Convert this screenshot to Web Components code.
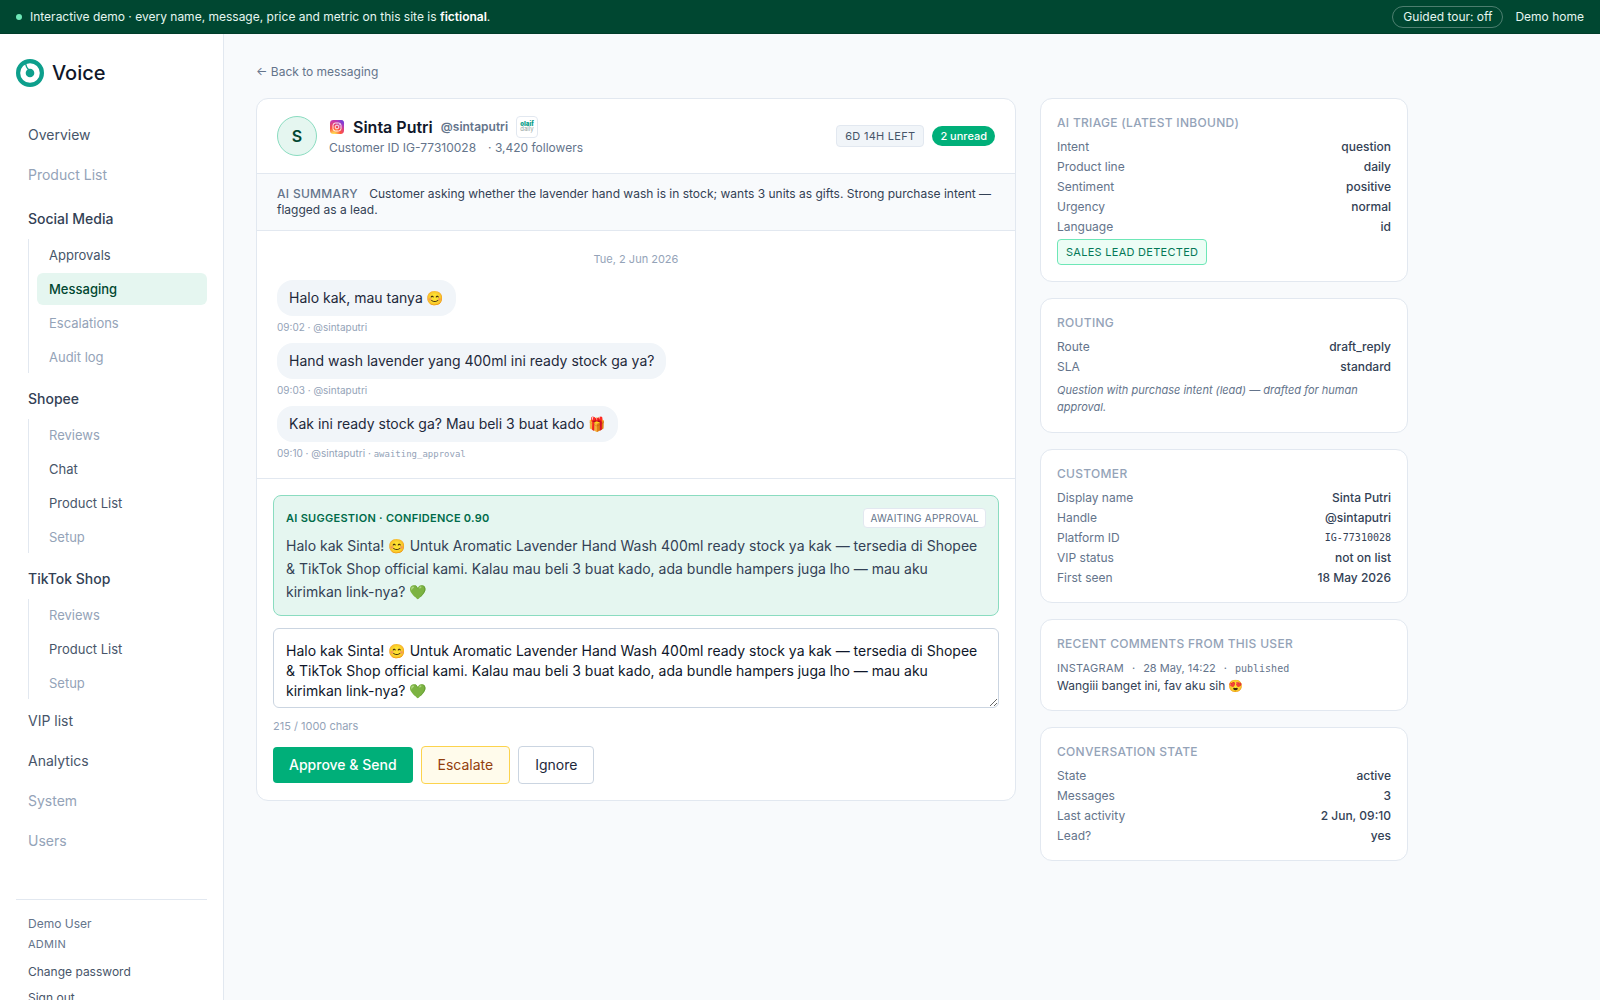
<!DOCTYPE html>
<html lang="en">
<head>
<meta charset="utf-8">
<meta name="viewport" content="width=device-width, initial-scale=1">
<title>Voice - Messaging</title>
<style>
  :root {
    --brand-900: #004731;
    --brand-700: #006b4a;
    --brand-500: #00af79;
    --brand-200: #8adcc0;
    --brand-50: #e5f6f0;
    --line: #e2e8f0;
    --line-strong: #cbd5e1;
    --surface: #f8fafc;
    --text: #0f172a;
    --text-body: #334155;
    --text-soft: #475569;
    --text-muted: #64748b;
    --text-faint: #94a3b8;
    --mono: "DejaVu Sans Mono", "Liberation Mono", monospace;
  }

  body {
    margin: 0;
    background: var(--surface);
    color: var(--text);
    font-family: Inter, "Noto Color Emoji", sans-serif;
    font-size: 14px;
    line-height: 20px;
  }
</style>
</head>
<body>
<voice-app></voice-app>

<script>
class DemoBanner extends HTMLElement {
  constructor() {
    super();
    this.attachShadow({ mode: "open" });
    this.touring = false;
  }

  connectedCallback() {
    this.render();
    this.attachListeners();
  }

  render() {
    this.shadowRoot.innerHTML = `
      <style>
        :host {
          display: flex;
          align-items: center;
          gap: 8px;
          box-sizing: border-box;
          height: 34px;
          padding: 0 16px;
          background: var(--brand-900);
          border-bottom: 1px solid #003d2a;
          color: #e5f6f0;
          font-size: 12px;
          line-height: 16px;
        }
        .dot {
          width: 6px;
          height: 6px;
          border-radius: 50%;
          background: #6ee7b7;
        }
        .message {
          flex: 1;
        }
        strong {
          color: #fff;
          font-weight: 600;
        }
        button {
          font: inherit;
          color: inherit;
          background: none;
          border: 1px solid rgba(255, 255, 255, 0.3);
          border-radius: 11px;
          padding: 2px 10px;
          margin: 0 4px 0 0;
          cursor: pointer;
        }
        a {
          color: inherit;
          text-decoration: none;
        }
      </style>
      <span class="dot"></span>
      <span class="message">Interactive demo · every name, message, price and metric on this site is <strong>fictional</strong>.</span>
      <button type="button">Guided tour: off</button>
      <a href="#home">Demo home</a>
    `;
  }

  attachListeners() {
    const button = this.shadowRoot.querySelector("button");
    button.addEventListener("click", () => {
      this.touring = !this.touring;
      button.textContent = `Guided tour: ${this.touring ? "on" : "off"}`;
    });
  }
}

class NavLink extends HTMLElement {
  constructor() {
    super();
    this.attachShadow({ mode: "open" });
  }

  connectedCallback() {
    this.shadowRoot.innerHTML = `
      <style>
        :host {
          display: block;
        }
        a {
          display: block;
          padding: 8px 12px;
          border-radius: 6px;
          color: var(--text-soft);
          text-decoration: none;
        }
        :host([sub]) a {
          padding: 6px 12px;
          font-size: 13px;
        }
        :host([muted]) a {
          color: var(--text-faint);
        }
        :host([active]) a {
          background: var(--brand-50);
          color: var(--brand-900);
          font-weight: 500;
        }
      </style>
      <a href="#${this.getAttribute("to") || ""}"><slot></slot></a>
    `;
  }
}

class NavGroup extends HTMLElement {
  constructor() {
    super();
    this.attachShadow({ mode: "open" });
  }

  connectedCallback() {
    this.shadowRoot.innerHTML = `
      <style>
        :host {
          display: block;
          padding-top: 8px;
        }
        .heading {
          padding: 4px 12px;
          margin-bottom: 6px;
          color: var(--text-body);
          font-weight: 500;
        }
        .items {
          display: flex;
          flex-direction: column;
          gap: 2px;
          margin-left: 12px;
          padding-left: 8px;
          border-left: 1px solid var(--line);
        }
      </style>
      <div class="heading">${this.getAttribute("label")}</div>
      <div class="items"><slot></slot></div>
    `;
  }
}

class SideBar extends HTMLElement {
  constructor() {
    super();
    this.attachShadow({ mode: "open" });
  }

  connectedCallback() {
    this.shadowRoot.innerHTML = `
      <style>
        :host {
          display: flex;
          flex-direction: column;
          box-sizing: border-box;
          width: 224px;
          flex: none;
          padding: 25px 16px 0;
          background: #fff;
          border-right: 1px solid var(--line);
        }
        .logo {
          display: flex;
          align-items: center;
          gap: 8px;
          margin-bottom: 30px;
          font-size: 20px;
          line-height: 28px;
          font-weight: 500;
        }
        nav {
          display: flex;
          flex-direction: column;
          gap: 4px;
        }
        .account {
          margin-top: 40px;
          padding: 14px 12px;
          border-top: 1px solid var(--line);
          color: var(--text-muted);
          font-size: 12px;
        }
        .role {
          font-size: 11px;
          letter-spacing: 0.025em;
        }
        .account a {
          display: block;
          margin-top: 6px;
          color: var(--text-soft);
          text-decoration: none;
        }
        .role + a {
          margin-top: 8px;
        }
      </style>
      <div class="logo">
        <svg width="28" height="28" viewBox="0 0 28 28" aria-hidden="true">
          <circle cx="14" cy="14" r="11.9" fill="#fff" stroke="#0d9f8c" stroke-width="4.2"/>
          <circle cx="14" cy="14" r="4.3" fill="#0d9f8c"/>
          <path d="M9.6 4.5 C10.2 8 10.6 9.4 13 11" fill="none" stroke="#0d9f8c" stroke-width="1.3"/>
        </svg>
        <span>Voice</span>
      </div>
      <nav>
        <nav-link to="overview">Overview</nav-link>
        <nav-link to="products" muted>Product List</nav-link>
        <nav-group label="Social Media">
          <nav-link to="approvals" sub>Approvals</nav-link>
          <nav-link to="messaging" sub active>Messaging</nav-link>
          <nav-link to="escalations" sub muted>Escalations</nav-link>
          <nav-link to="audit" sub muted>Audit log</nav-link>
        </nav-group>
        <nav-group label="Shopee">
          <nav-link to="shopee-reviews" sub muted>Reviews</nav-link>
          <nav-link to="shopee-chat" sub>Chat</nav-link>
          <nav-link to="shopee-products" sub>Product List</nav-link>
          <nav-link to="shopee-setup" sub muted>Setup</nav-link>
        </nav-group>
        <nav-group label="TikTok Shop">
          <nav-link to="tiktok-reviews" sub muted>Reviews</nav-link>
          <nav-link to="tiktok-products" sub>Product List</nav-link>
          <nav-link to="tiktok-setup" sub muted>Setup</nav-link>
        </nav-group>
        <nav-link to="vip">VIP list</nav-link>
        <nav-link to="analytics">Analytics</nav-link>
        <nav-link to="system" muted>System</nav-link>
        <nav-link to="users" muted>Users</nav-link>
      </nav>
      <div class="account">
        <div>Demo User</div>
        <div class="role">ADMIN</div>
        <a href="#password">Change password</a>
        <a href="#signout">Sign out</a>
      </div>
    `;
  }
}

class ChatMessage extends HTMLElement {
  constructor() {
    super();
    this.attachShadow({ mode: "open" });
  }

  connectedCallback() {
    const status = this.getAttribute("status");
    this.shadowRoot.innerHTML = `
      <style>
        :host {
          display: flex;
          flex-direction: column;
          align-items: flex-start;
          gap: 4px;
        }
        .bubble {
          padding: 8px 12px;
          border-radius: 16px;
          background: #f1f5f9;
          color: #1e293b;
        }
        .meta {
          color: var(--text-faint);
          font-size: 10px;
          line-height: 15px;
        }
        code {
          font-family: var(--mono);
          font-size: 9px;
        }
      </style>
      <div class="bubble"><slot></slot></div>
      <div class="meta">${this.getAttribute("time")} · ${this.getAttribute("from")}${
        status ? ` · <code>${status}</code>` : ""
      }</div>
    `;
  }
}

class ReplyComposer extends HTMLElement {
  constructor() {
    super();
    this.attachShadow({ mode: "open" });
    this.suggestion =
      "Halo kak Sinta! 😊 Untuk Aromatic Lavender Hand Wash 400ml ready stock ya kak — tersedia di Shopee & TikTok Shop official kami. Kalau mau beli 3 buat kado, ada bundle hampers juga lho — mau aku kirimkan link-nya? 💚";
  }

  connectedCallback() {
    this.render();
    this.attachListeners();
  }

  render() {
    this.shadowRoot.innerHTML = `
      <style>
        :host {
          display: block;
          padding: 16px;
          border-top: 1px solid var(--line);
        }
        .suggestion {
          padding: 12px;
          border: 1px solid var(--brand-200);
          border-radius: 8px;
          background: var(--brand-50);
        }
        .suggestion header {
          display: flex;
          align-items: center;
          justify-content: space-between;
          margin-bottom: 6px;
          color: var(--brand-700);
          font-size: 11px;
          font-weight: 600;
          letter-spacing: 0.025em;
        }
        .status {
          padding: 2px 6px;
          border: 1px solid var(--line);
          border-radius: 4px;
          background: #fff;
          color: var(--text-muted);
          font-size: 10px;
          line-height: 14px;
          font-weight: 400;
          letter-spacing: 0.025em;
        }
        p {
          margin: 0;
          color: var(--text-body);
          line-height: 23px;
        }
        textarea {
          display: block;
          box-sizing: border-box;
          width: 100%;
          height: 80px;
          margin-top: 12px;
          padding: 12px 12px 6px;
          border: 1px solid var(--line-strong);
          border-radius: 6px;
          background: #fff;
          color: var(--text);
          font: inherit;
          resize: vertical;
        }
        .count {
          margin: 10px 0 12px;
          color: var(--text-faint);
          font-size: 11px;
          line-height: 16px;
        }
        .actions {
          display: flex;
          align-items: center;
          gap: 8px;
        }
        button {
          margin: 0;
          padding: 8px 16px;
          border: 1px solid var(--line-strong);
          border-radius: 4px;
          background: #fff;
          color: #1e293b;
          font: inherit;
          cursor: pointer;
        }
        .approve {
          border: none;
          background: var(--brand-500);
          color: #fff;
          font-weight: 500;
        }
        .escalate {
          border-color: #fcd34d;
          background: #fffbeb;
          color: #92400e;
        }
      </style>
      <section class="suggestion">
        <header>
          <span>AI SUGGESTION · CONFIDENCE 0.90</span>
          <span class="status">AWAITING APPROVAL</span>
        </header>
        <p></p>
      </section>
      <textarea aria-label="Reply" maxlength="1000"></textarea>
      <div class="count">215 / 1000 chars</div>
      <div class="actions">
        <button type="button" class="approve">Approve &amp; Send</button>
        <button type="button" class="escalate">Escalate</button>
        <button type="button">Ignore</button>
      </div>
    `;
    this.shadowRoot.querySelector("p").textContent = this.suggestion;
    this.shadowRoot.querySelector("textarea").value = this.suggestion;
  }

  attachListeners() {
    const textarea = this.shadowRoot.querySelector("textarea");
    const count = this.shadowRoot.querySelector(".count");
    textarea.addEventListener("input", () => {
      count.textContent = `${textarea.value.length} / 1000 chars`;
    });
  }
}

class ConversationCard extends HTMLElement {
  constructor() {
    super();
    this.attachShadow({ mode: "open" });
  }

  connectedCallback() {
    this.shadowRoot.innerHTML = `
      <style>
        :host {
          display: block;
          border: 1px solid var(--line);
          border-radius: 12px;
          background: #fff;
          overflow: hidden;
        }
        .head {
          display: flex;
          align-items: center;
          gap: 12px;
          padding: 16px 20px;
          border-bottom: 1px solid var(--line);
        }
        .avatar {
          display: flex;
          align-items: center;
          justify-content: center;
          box-sizing: border-box;
          width: 40px;
          height: 40px;
          border: 1px solid var(--brand-200);
          border-radius: 50%;
          background: var(--brand-50);
          color: var(--brand-900);
          font-size: 16px;
          font-weight: 600;
        }
        .who {
          flex: 1;
        }
        .name {
          display: flex;
          align-items: center;
          gap: 8px;
        }
        h1 {
          margin: 0;
          font-size: 16px;
          line-height: 24px;
          font-weight: 600;
        }
        .handle {
          color: var(--text-muted);
          font-size: 12px;
          font-weight: 600;
        }
        .brand {
          display: block;
        }
        .sub {
          display: flex;
          gap: 12px;
          color: var(--text-muted);
          font-size: 12px;
          line-height: 18px;
        }
        .pills {
          display: flex;
          align-items: center;
          gap: 8px;
          font-size: 11px;
          line-height: 16px;
        }
        .window {
          padding: 2px 8px;
          border: 1px solid var(--line);
          border-radius: 4px;
          background: #f1f5f9;
          color: var(--text-soft);
          letter-spacing: 0.025em;
        }
        .unread {
          padding: 2px 8px;
          border-radius: 10px;
          background: var(--brand-500);
          color: #fff;
          font-weight: 500;
        }
        .summary {
          padding: 12px 20px;
          border-bottom: 1px solid var(--line);
          background: var(--surface);
          color: var(--text-body);
          font-size: 12px;
          line-height: 16px;
        }
        .summary b {
          margin-right: 8px;
          color: var(--text-muted);
          font-weight: 500;
          letter-spacing: 0.025em;
        }
        .thread {
          display: flex;
          flex-direction: column;
          gap: 8px;
          padding: 16px 20px;
        }
        time {
          padding: 4px 0;
          color: var(--text-faint);
          font-size: 11px;
          line-height: 17px;
          text-align: center;
        }
      </style>
      <div class="head">
        <div class="avatar">S</div>
        <div class="who">
          <div class="name">
            <svg width="16" height="16" viewBox="0 0 16 16" role="img" aria-label="Instagram">
              <defs>
                <radialGradient id="ig-warm" cx="0.27" cy="1.07" r="1">
                  <stop offset="0" stop-color="#ffdd55"/>
                  <stop offset="0.12" stop-color="#ffdd55"/>
                  <stop offset="0.5" stop-color="#ff543e"/>
                  <stop offset="1" stop-color="#c837ab"/>
                </radialGradient>
                <radialGradient id="ig-cool" cx="1" cy="0" r="0.75">
                  <stop offset="0" stop-color="#4a4fe0"/>
                  <stop offset="0.3" stop-color="#7a3fd8" stop-opacity="0.9"/>
                  <stop offset="1" stop-color="#c837ab" stop-opacity="0"/>
                </radialGradient>
              </defs>
              <rect x="1" y="1" width="14" height="14" rx="3.4" fill="url(#ig-warm)"/>
              <rect x="1" y="1" width="14" height="14" rx="3.4" fill="url(#ig-cool)"/>
              <rect x="4" y="4" width="8" height="8" rx="2.4" fill="none" stroke="#fff" stroke-width="0.9"/>
              <circle cx="8" cy="8" r="1.9" fill="none" stroke="#fff" stroke-width="0.9"/>
              <circle cx="10.3" cy="5.7" r="0.5" fill="#fff"/>
            </svg>
            <h1>Sinta Putri</h1>
            <span class="handle">@sintaputri</span>
            <svg class="brand" width="22" height="22" viewBox="0 0 22 22">
              <rect x="0.5" y="0.5" width="21" height="21" rx="3.5" fill="#fff" stroke="#e2e8f0"/>
              <text x="11" y="10" text-anchor="middle" font-size="6" font-weight="900" fill="#0d9f8c">olaif</text>
              <text x="11" y="15" text-anchor="middle" font-size="6" fill="#94a3a0">daily</text>
            </svg>
          </div>
          <div class="sub"><span>Customer ID IG-77310028</span><span>· 3,420 followers</span></div>
        </div>
        <div class="pills">
          <span class="window">6D 14H LEFT</span>
          <span class="unread">2 unread</span>
        </div>
      </div>
      <div class="summary"><b>AI SUMMARY</b> Customer asking whether the lavender hand wash is in stock; wants 3 units as gifts. Strong purchase intent — flagged as a lead.</div>
      <div class="thread">
        <time datetime="2026-06-02">Tue, 2 Jun 2026</time>
        <chat-message time="09:02" from="@sintaputri">Halo kak, mau tanya 😊</chat-message>
        <chat-message time="09:03" from="@sintaputri">Hand wash lavender yang 400ml ini ready stock ga ya?</chat-message>
        <chat-message time="09:10" from="@sintaputri" status="awaiting_approval">Kak ini ready stock ga? Mau beli 3 buat kado 🎁</chat-message>
      </div>
      <reply-composer></reply-composer>
    `;
  }
}

class InfoCard extends HTMLElement {
  constructor() {
    super();
    this.attachShadow({ mode: "open" });
  }

  connectedCallback() {
    this.shadowRoot.innerHTML = `
      <style>
        :host {
          display: block;
          padding: 16px;
          border: 1px solid var(--line);
          border-radius: 12px;
          background: #fff;
          font-size: 12px;
          line-height: 16px;
        }
        h2 {
          margin: 0 0 8px;
          color: var(--text-faint);
          font-size: 12px;
          font-weight: 500;
          letter-spacing: 0.025em;
        }
        .rows {
          display: flex;
          flex-direction: column;
          gap: 4px;
        }
      </style>
      <h2>${this.getAttribute("heading")}</h2>
      <div class="rows"><slot></slot></div>
      <slot name="footer"></slot>
    `;
  }
}

class InfoRow extends HTMLElement {
  constructor() {
    super();
    this.attachShadow({ mode: "open" });
  }

  connectedCallback() {
    this.shadowRoot.innerHTML = `
      <style>
        :host {
          display: flex;
          justify-content: space-between;
          gap: 12px;
        }
        .label {
          color: var(--text-muted);
        }
        .value {
          color: var(--text-body);
          font-weight: 500;
          text-align: right;
        }
        :host([mono]) .value {
          font-family: var(--mono);
          font-size: 10px;
          font-weight: 400;
        }
      </style>
      <span class="label">${this.getAttribute("label")}</span>
      <span class="value"><slot></slot></span>
    `;
  }
}

class VoiceApp extends HTMLElement {
  constructor() {
    super();
    this.attachShadow({ mode: "open" });
  }

  connectedCallback() {
    this.shadowRoot.innerHTML = `
      <style>
        :host {
          display: flex;
          flex-direction: column;
          min-height: 100vh;
        }
        .layout {
          display: flex;
          flex: 1;
        }
        main {
          flex: 1;
          min-width: 0;
          padding: 28px 32px;
        }
        .content {
          max-width: 1152px;
        }
        .back {
          display: block;
          margin-bottom: 16px;
          color: var(--text-muted);
          font-size: 12px;
          text-decoration: none;
        }
        .grid {
          display: grid;
          grid-template-columns: repeat(3, 1fr);
          gap: 24px;
          align-items: start;
        }
        conversation-card {
          grid-column: span 2;
        }
        aside {
          display: flex;
          flex-direction: column;
          gap: 16px;
        }
        .lead {
          align-self: flex-start;
          padding: 4px 8px;
          border: 1px solid #6ee7b7;
          border-radius: 4px;
          background: #ecfdf5;
          color: #047857;
          font-size: 11px;
          letter-spacing: 0.025em;
        }
        .reason {
          margin: 7px 0 0;
          color: var(--text-muted);
          font-size: 11px;
          line-height: 17px;
          font-style: italic;
        }
        .comment {
          color: var(--text-body);
          line-height: 17px;
        }
        .comment-meta {
          display: flex;
          gap: 8px;
          color: var(--text-muted);
          font-size: 11px;
        }
        .platform {
          letter-spacing: 0.025em;
        }
        code {
          font-family: var(--mono);
          font-size: 10px;
        }
      </style>
      <demo-banner></demo-banner>
      <div class="layout">
        <side-bar></side-bar>
        <main>
          <div class="content">
            <a class="back" href="#messaging">← Back to messaging</a>
            <div class="grid">
              <conversation-card></conversation-card>
              <aside>
                <info-card heading="AI TRIAGE (LATEST INBOUND)">
                  <info-row label="Intent">question</info-row>
                  <info-row label="Product line">daily</info-row>
                  <info-row label="Sentiment">positive</info-row>
                  <info-row label="Urgency">normal</info-row>
                  <info-row label="Language">id</info-row>
                  <span class="lead">SALES LEAD DETECTED</span>
                </info-card>
                <info-card heading="ROUTING">
                  <info-row label="Route">draft_reply</info-row>
                  <info-row label="SLA">standard</info-row>
                  <p class="reason" slot="footer">Question with purchase intent (lead) — drafted for human approval.</p>
                </info-card>
                <info-card heading="CUSTOMER">
                  <info-row label="Display name">Sinta Putri</info-row>
                  <info-row label="Handle">@sintaputri</info-row>
                  <info-row label="Platform ID" mono>IG-77310028</info-row>
                  <info-row label="VIP status">not on list</info-row>
                  <info-row label="First seen">18 May 2026</info-row>
                </info-card>
                <info-card heading="RECENT COMMENTS FROM THIS USER">
                  <div class="comment" slot="footer">
                    <div class="comment-meta">
                      <span class="platform">INSTAGRAM</span><span>·</span><span>28 May, 14:22</span><span>·</span><code>published</code>
                    </div>
                    <div>Wangiii banget ini, fav aku sih 😍</div>
                  </div>
                </info-card>
                <info-card heading="CONVERSATION STATE">
                  <info-row label="State">active</info-row>
                  <info-row label="Messages">3</info-row>
                  <info-row label="Last activity">2 Jun, 09:10</info-row>
                  <info-row label="Lead?">yes</info-row>
                </info-card>
              </aside>
            </div>
          </div>
        </main>
      </div>
    `;
  }
}

customElements.define("demo-banner", DemoBanner);
customElements.define("nav-link", NavLink);
customElements.define("nav-group", NavGroup);
customElements.define("side-bar", SideBar);
customElements.define("chat-message", ChatMessage);
customElements.define("reply-composer", ReplyComposer);
customElements.define("conversation-card", ConversationCard);
customElements.define("info-card", InfoCard);
customElements.define("info-row", InfoRow);
customElements.define("voice-app", VoiceApp);
</script>
</body>
</html>
